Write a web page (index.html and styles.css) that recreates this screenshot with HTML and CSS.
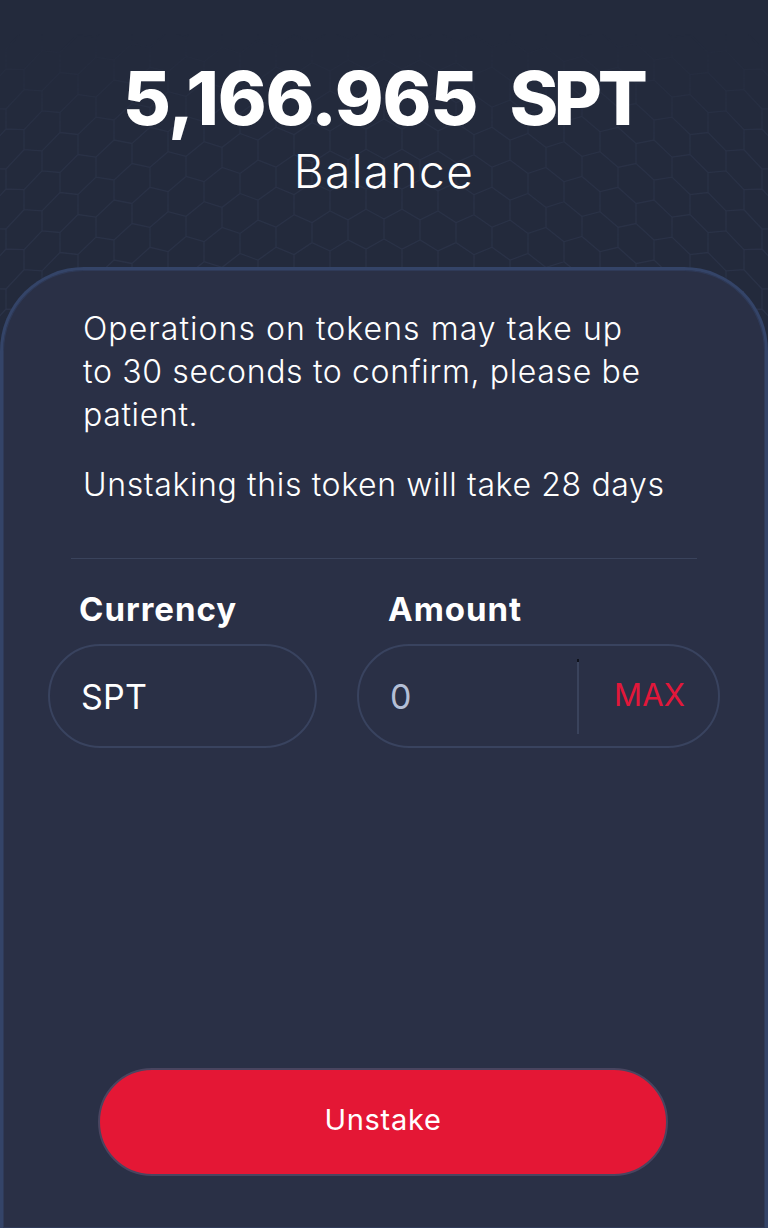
FILE: index.html
```html
<!DOCTYPE html>
<html lang="en">
<head>
<meta charset="utf-8">
<title>Unstake SPT</title>
<link rel="stylesheet" href="styles.css">
</head>
<body>
<main class="screen">
  <svg class="hex-bg" width="768" height="340" aria-hidden="true">
    <defs>
      <linearGradient id="fade" x1="0" y1="0" x2="0" y2="1">
        <stop offset="0.1" stop-color="#fff" stop-opacity="0"/>
        <stop offset="0.4" stop-color="#fff" stop-opacity="0.8"/>
        <stop offset="1" stop-color="#fff" stop-opacity="1"/>
      </linearGradient>
      <mask id="fade-mask"><rect width="768" height="340" fill="url(#fade)"/></mask>
    </defs>
    <path id="hex-lines" class="hex-lines" mask="url(#fade-mask)" d=""/>
  </svg>

  <header class="balance">
    <h1 class="balance-value"><span class="amount">5,166.965</span><span class="unit">SPT</span></h1>
    <p class="balance-label">Balance</p>
  </header>

  <section class="card">
    <div class="notes">
      <p class="note"><span class="note-wide">Operations on tokens may take up</span><br>to 30 seconds to confirm, please be<br>patient.</p>
      <p class="note">Unstaking this token will take 28 days</p>
    </div>
    <hr class="divider">
    <div class="fields">
      <div class="field field-currency">
        <label class="field-label">Currency</label>
        <div class="pill"><span class="pill-value">SPT</span></div>
      </div>
      <div class="field field-amount">
        <label class="field-label">Amount</label>
        <div class="pill">
          <span class="pill-value pill-placeholder">0</span>
          <span class="max"><span class="max-text">MAX</span></span>
        </div>
      </div>
    </div>
    <div class="action">
      <button class="unstake" type="button">Unstake</button>
    </div>
  </section>
</main>
<script src="script.js"></script>
</body>
</html>
```

FILE: styles.css
```css
* { box-sizing: border-box; }
html, body { margin: 0; padding: 0; }
body {
  width: 768px;
  height: 1228px;
  overflow: hidden;
  background: #232a3c;
  font-family: "Inter", "Liberation Sans", sans-serif;
  color: #fff;
}
.screen {
  position: relative;
  width: 768px;
  height: 1228px;
  display: flex;
  flex-direction: column;
}
.hex-bg {
  position: absolute;
  top: 0;
  left: 0;
}
.hex-lines {
  fill: none;
  stroke: #2b3348;
  stroke-width: 1.3;
}
.balance {
  position: relative;
  height: 267px;
  padding-top: 55px;
  text-align: center;
}
.balance-value {
  margin: 0;
  display: flex;
  justify-content: center;
  gap: 32px;
  padding-right: 2px;
  font-size: 74px;
  line-height: 86px;
  font-weight: 800;
}
.amount { letter-spacing: -1.2px; }
.unit { letter-spacing: -4.4px; }
.balance-label {
  margin: 3px 0 0;
  font-size: 46px;
  line-height: 54px;
  font-weight: 300;
  letter-spacing: 1.4px;
}
.card {
  position: relative;
  flex: 1;
  background: #2a3046;
  border: 3px solid #344468;
  border-bottom: 0;
  border-radius: 84px 84px 0 0;
  display: flex;
  flex-direction: column;
  box-shadow: inset 0 0 0 1px #2f3a58;
}
.notes {
  padding: 37px 40px 0 80px;
}
.note {
  margin: 0 0 27px;
  font-size: 32px;
  line-height: 43px;
  font-weight: 300;
  letter-spacing: 0.64px;
  white-space: nowrap;
}
.note-wide { letter-spacing: 1.05px; }
.divider {
  margin: 25px 68px 0;
  border: 0;
  border-top: 1px solid #3a435c;
  width: 626px;
}
.fields {
  display: flex;
  gap: 40px;
  padding: 27px 45px 0;
}
.field-currency { width: 269px; }
.field-amount { width: 363px; }
.field-label {
  display: block;
  padding-left: 31px;
  font-size: 33px;
  line-height: 46px;
  font-weight: 700;
  letter-spacing: 1px;
}
.pill {
  margin-top: 12px;
  height: 104px;
  border: 2px solid #39435f;
  border-radius: 52px;
  display: flex;
  align-items: center;
  padding-left: 31px;
}
.pill-value {
  flex: 1;
  font-size: 34px;
  font-weight: 400;
  letter-spacing: 0.2px;
}
.pill-placeholder { color: #b4bfd6; }
.max {
  position: relative;
  width: 141px;
  height: 74px;
  border-left: 2px solid #3a435c;
  display: flex;
  align-items: center;
  padding-left: 35px;
  padding-bottom: 6px;
  margin-top: 2px;
}
.max::before {
  content: "";
  position: absolute;
  top: -1px;
  left: -2px;
  width: 2px;
  height: 3px;
  background: #10131d;
}
.max-text {
  color: #e2173a;
  font-size: 31px;
  font-weight: 400;
  letter-spacing: 0.2px;
}
.action {
  margin-top: auto;
  padding: 0 97px 52px 95px;
}
.unstake {
  display: block;
  width: 570px;
  height: 108px;
  padding: 0 0 6px;
  border: 2px solid #4a4560;
  border-radius: 54px;
  background: #e41735;
  color: #fff;
  font-family: inherit;
  font-size: 29px;
  font-weight: 400;
  letter-spacing: 0.7px;
}
```

FILE: script.js
```js
// Draws the faint dome-shaped honeycomb behind the balance header.
(function () {
  var w = 36, h = 20, cx = 384, a = 0.0007;
  function warp(x, y) {
    var dx = x - cx;
    var ny = y + a * dx * dx - 6;
    return (cx + dx).toFixed(1) + " " + ny.toFixed(1);
  }
  var d = "";
  for (var r = -8; r < 14; r++) {
    var rowY = 205 + r * (h * 1.5);
    var offset = ((r % 2) + 2) % 2 ? w / 2 : 0;
    for (var c = -12; c < 13; c++) {
      var x = cx + c * w + offset;
      d += "M" + warp(x - w / 2, rowY + h / 2) +
           "L" + warp(x - w / 2, rowY - h / 2) +
           "L" + warp(x, rowY - h) +
           "L" + warp(x + w / 2, rowY - h / 2);
      d += "M" + warp(x - w / 2, rowY + h / 2) +
           "L" + warp(x, rowY + h);
    }
  }
  document.getElementById("hex-lines").setAttribute("d", d);
})();
```
